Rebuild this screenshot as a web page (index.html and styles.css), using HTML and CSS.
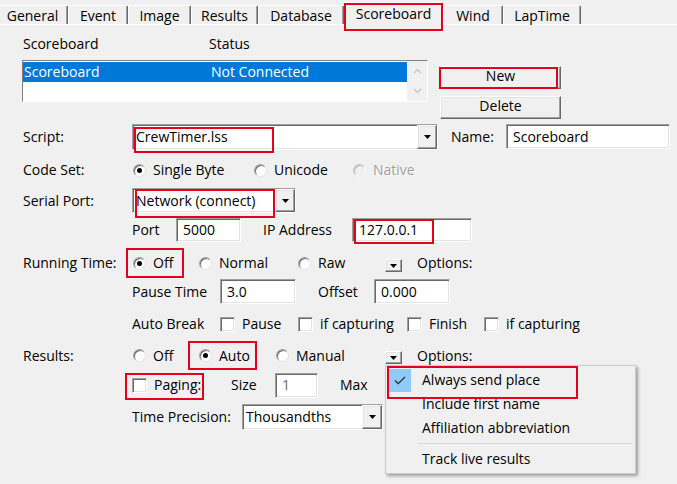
FILE: index.html
```html
<!DOCTYPE html>
<html>
<head>
<meta charset="utf-8">
<title>Scoreboard</title>
<link rel="stylesheet" href="styles.css">
</head>
<body>
<div class="tabs">
  <div class="tab tab-general">General</div>
  <div class="tab tab-event">Event</div>
  <div class="tab tab-image">Image</div>
  <div class="tab tab-results">Results</div>
  <div class="tab tab-database">Database</div>
  <div class="tab tab-scoreboard active mark mark-tab">Scoreboard</div>
  <div class="tab tab-wind">Wind</div>
  <div class="tab tab-laptime">LapTime</div>
</div>

<main class="panel">
  <div class="list-head"><span class="head-name">Scoreboard</span><span>Status</span></div>

  <div class="list-area">
    <div class="listbox">
      <div class="list-rows">
        <div class="list-row selected"><span class="row-name">Scoreboard</span><span>Not Connected</span></div>
      </div>
      <div class="vscroll">
        <span class="scroll-arrow"><svg width="9" height="6" viewBox="0 0 9 6"><path d="M1 5L4.5 1.5L8 5" fill="none" stroke="#c2c2c2" stroke-width="1.2"/></svg></span>
        <span class="scroll-arrow"><svg width="9" height="6" viewBox="0 0 9 6"><path d="M1 1L4.5 4.5L8 1" fill="none" stroke="#c2c2c2" stroke-width="1.2"/></svg></span>
      </div>
    </div>
    <div class="list-buttons">
      <div class="btn btn-new raised mark mark-new">New</div>
      <div class="btn btn-delete raised">Delete</div>
    </div>
  </div>

  <div class="row row-script">
    <span class="label">Script:</span>
    <div class="combo combo-script sunken mark mark-script">
      <span class="combo-value">CrewTimer.lss</span>
      <span class="drop raised"><svg width="7" height="4" viewBox="0 0 7 4"><path d="M0 0H7L3.5 4Z" fill="#000"/></svg></span>
    </div>
    <span class="label-name">Name:</span>
    <div class="field sunken field-name">Scoreboard</div>
  </div>

  <div class="row row-codeset">
    <span class="label">Code Set:</span>
    <span class="opt opt-single"><span class="radio checked"></span><span class="opt-text">Single Byte</span></span>
    <span class="opt opt-unicode"><span class="radio"></span><span class="opt-text">Unicode</span></span>
    <span class="opt opt-native disabled"><span class="radio"></span><span class="opt-text">Native</span></span>
  </div>

  <div class="row row-serial">
    <span class="label">Serial Port:</span>
    <div class="combo combo-serial sunken mark mark-serial">
      <span class="combo-value">Network (connect)</span>
      <span class="drop raised"><svg width="7" height="4" viewBox="0 0 7 4"><path d="M0 0H7L3.5 4Z" fill="#000"/></svg></span>
    </div>
  </div>

  <div class="row row-port indent">
    <span class="label-port">Port</span>
    <div class="field sunken field-port">5000</div>
    <span class="label-ip">IP Address</span>
    <div class="field sunken field-ip mark mark-ip">127.0.0.1</div>
  </div>

  <div class="row row-running">
    <span class="label">Running Time:</span>
    <span class="opt opt-off mark mark-off"><span class="radio checked"></span><span class="opt-text">Off</span></span>
    <span class="opt opt-normal"><span class="radio"></span><span class="opt-text">Normal</span></span>
    <span class="opt opt-raw"><span class="radio"></span><span class="opt-text">Raw</span></span>
    <span class="mini-drop raised"><svg width="7" height="4" viewBox="0 0 7 4"><path d="M0 0H7L3.5 4Z" fill="#000"/></svg></span>
    <span class="options-label">Options:</span>
  </div>

  <div class="row row-pause indent">
    <span class="label-sub">Pause Time</span>
    <div class="field sunken field-short">3.0</div>
    <span class="label-offset">Offset</span>
    <div class="field sunken field-short">0.000</div>
  </div>

  <div class="row row-autobreak indent">
    <span class="label-sub">Auto Break</span>
    <span class="opt chk-pause"><span class="checkbox"></span><span class="opt-text">Pause</span></span>
    <span class="opt chk-capt1"><span class="checkbox"></span><span class="opt-text">if capturing</span></span>
    <span class="opt chk-finish"><span class="checkbox"></span><span class="opt-text">Finish</span></span>
    <span class="opt chk-capt2"><span class="checkbox"></span><span class="opt-text">if capturing</span></span>
  </div>

  <div class="row row-results">
    <span class="label">Results:</span>
    <span class="opt opt-off"><span class="radio"></span><span class="opt-text">Off</span></span>
    <span class="opt opt-auto mark mark-auto"><span class="radio checked"></span><span class="opt-text">Auto</span></span>
    <span class="opt opt-manual"><span class="radio"></span><span class="opt-text">Manual</span></span>
    <span class="mini-drop raised"><svg width="7" height="4" viewBox="0 0 7 4"><path d="M0 0H7L3.5 4Z" fill="#000"/></svg></span>
    <span class="options-label">Options:</span>
  </div>

  <div class="row row-paging indent">
    <span class="opt chk-paging mark mark-paging"><span class="checkbox"></span><span class="opt-text">Paging:</span></span>
    <span class="label-size">Size</span>
    <div class="field sunken field-size disabled-field">1</div>
    <span class="label-max">Max</span>
  </div>

  <div class="row row-time indent">
    <span class="label-time">Time Precision:</span>
    <div class="combo combo-time sunken">
      <span class="combo-value">Thousandths</span>
      <span class="drop raised"><svg width="7" height="4" viewBox="0 0 7 4"><path d="M0 0H7L3.5 4Z" fill="#000"/></svg></span>
    </div>
  </div>
</main>

<div class="menu">
  <div class="menu-item mark mark-always">
    <span class="check checked"><svg width="12" height="9" viewBox="0 0 12 9"><path d="M1 4.5L4.2 7.6L11 1" fill="none" stroke="#2b2b2b" stroke-width="1.2"/></svg></span>
    <span>Always send place</span>
  </div>
  <div class="menu-item"><span class="check"></span><span>Include first name</span></div>
  <div class="menu-item"><span class="check"></span><span>Affiliation abbreviation</span></div>
  <div class="menu-sep"></div>
  <div class="menu-item"><span class="check"></span><span>Track live results</span></div>
</div>
</body>
</html>
```

FILE: styles.css
```css
* { box-sizing: border-box; }
html, body { margin: 0; padding: 0; }
body {
  width: 677px;
  height: 484px;
  overflow: hidden;
  position: relative;
  background: #f0f0f0;
  color: #000;
  font-family: "Open Sans", "Noto Sans", sans-serif;
  font-size: 14px;
  line-height: 20px;
}

/* ---------- red annotation boxes ---------- */
.mark { position: relative; }
.mark::after {
  content: "";
  position: absolute;
  border: 2px solid #e2001a;
  pointer-events: none;
}
.mark-tab::after { left: -1px; right: -1px; top: 0; bottom: -6px; }
.mark-new::after { left: -2px; right: 2px; top: 0; bottom: -1px; }
.mark-script::after { left: 1px; top: 2px; width: 136px; height: 22px; }
.mark-serial::after { left: 2px; top: 0; width: 136px; height: 25px; }
.mark-ip::after { left: 1px; top: 0; width: 76px; height: 21px; }
.mark-off::after { left: -6px; right: 14px; top: 0; bottom: 0; }
.mark-auto::after { left: -10px; right: 18px; top: 0; bottom: 0; }
.mark-paging::after { left: -7px; right: 27px; top: 1px; bottom: -2px; }
.mark-always::after { left: -1px; top: -2px; width: 187px; height: 29px; }

/* ---------- 3D borders ---------- */
.sunken {
  background: #fff;
  border: 1px solid;
  border-color: #a0a0a0 #fff #fff #a0a0a0;
  box-shadow: inset 1px 1px 0 #696969, inset -1px -1px 0 #e3e3e3;
}
.raised {
  background: #f0f0f0;
  border: 1px solid;
  border-color: #fff #696969 #696969 #fff;
  box-shadow: inset -1px -1px 0 #a0a0a0, inset 1px 1px 0 #e3e3e3;
}

/* ---------- tabs ---------- */
.tabs {
  display: flex;
  align-items: flex-end;
  height: 25px;
  margin-left: -3px;
  border-bottom: 1px solid #fff;
}
.tab {
  height: 19px;
  padding-top: 1px;
  line-height: 17px;
  text-align: center;
  white-space: nowrap;
  border: 1px solid #fff;
  border-bottom: 0;
  border-right-color: #696969;
  box-shadow: inset -1px 0 0 #a0a0a0;
  border-radius: 2px 2px 0 0;
  background: #f0f0f0;
}
.tab-general { width: 71px; }
.tab-event { width: 60px; }
.tab-image { width: 63px; }
.tab-results { width: 67px; }
.tab-database { width: 86px; }
.tab-scoreboard { width: 99px; }
.tab-wind { width: 60px; }
.tab-laptime { width: 78px; }
.tab.active {
  height: 23px;
  margin-bottom: -1px;
  padding-top: 2px;
}

/* ---------- panel ---------- */
.panel { padding-left: 23px; }

.list-head { display: flex; margin-top: 9px; height: 20px; }
.head-name { width: 186px; }

.list-area { display: flex; margin-top: 6px; margin-left: -1px; }
.listbox {
  width: 406px;
  height: 42px;
  display: flex;
  background: #fff;
  border: 1px solid;
  border-color: #828282 #fff #fff #828282;
}
.list-rows { flex: 1; padding-top: 1px; }
.list-row { display: flex; height: 20px; padding-left: 1px; }
.list-row.selected { background: #0078d7; color: #fff; }
.row-name { width: 187px; }
.vscroll {
  width: 20px;
  display: flex;
  flex-direction: column;
  background: #f0f0f0;
}
.scroll-arrow { flex: 1; display: flex; align-items: center; justify-content: center; }
.scroll-arrow svg { display: block; }

.list-buttons { display: flex; flex-direction: column; margin-left: 12px; }
.btn { width: 121px; height: 23px; text-align: center; line-height: 18px; }
.btn-new { margin-top: 6px; }
.btn-delete { margin-top: 7px; }

/* ---------- form rows ---------- */
.row { display: flex; align-items: center; }
.row.indent { margin-left: 109px; }
.label { width: 109px; flex: none; }

.combo { display: flex; position: relative; }
.combo-value { flex: 1; padding-left: 3px; display: flex; align-items: center; white-space: nowrap; }
.drop { width: 20px; display: flex; align-items: center; justify-content: center; }
.drop svg, .mini-drop svg { display: block; }

.field { padding-left: 6px; display: flex; align-items: center; white-space: nowrap; }

.row-script { margin-top: 5px; height: 26px; align-items: flex-start; }
.combo-script { width: 306px; height: 26px; }
.row-script .label { align-self: center; }
.label-name { width: 55px; margin-left: 13px; align-self: center; }
.field-name { width: 164px; height: 25px; }

.row-codeset { margin-top: 6px; height: 28px; }
.opt { display: flex; align-items: center; flex: none; align-self: stretch; }
.opt-text { margin-left: 7px; white-space: nowrap; }
.opt .radio { margin-left: 1px; }
.opt-single { width: 121px; }
.opt-unicode { width: 99px; }
.disabled .opt-text { color: #a0a0a0; text-shadow: 1px 1px 0 #fff; }

.radio {
  width: 13px;
  height: 13px;
  flex: none;
  border-radius: 50%;
  background: #fff;
  border: 1px solid;
  border-color: #a0a0a0 #e3e3e3 #e3e3e3 #a0a0a0;
  box-shadow: inset 1px 1px 0 #696969;
  position: relative;
}
.radio.checked::after {
  content: "";
  position: absolute;
  left: 3px;
  top: 3px;
  width: 5px;
  height: 5px;
  border-radius: 50%;
  background: #000;
}
.disabled .radio { background: #f0f0f0; border-color: #c8c8c8 #f6f6f6 #f6f6f6 #c8c8c8; box-shadow: inset 1px 1px 0 #b8b8b8; }

.checkbox {
  width: 15px;
  height: 15px;
  flex: none;
  background: #fff;
  border: 1px solid;
  border-color: #a0a0a0 #fff #fff #a0a0a0;
  box-shadow: inset 1px 1px 0 #696969, inset -1px -1px 0 #e3e3e3;
}

.row-serial { margin-top: 4px; height: 25px; }
.combo-serial { width: 164px; height: 25px; }

.row-port { margin-top: 5px; height: 24px; }
.label-port { width: 44px; }
.field-port { width: 65px; height: 24px; }
.label-ip { width: 89px; margin-left: 22px; }
.field-ip { width: 120px; height: 24px; }

.row-running { margin-top: 6px; height: 30px; }
.opt-off { width: 66px; }
.opt-normal { width: 99px; }
.opt-raw { width: 88px; }
.mini-drop {
  width: 17px;
  height: 13px;
  align-self: flex-end;
  margin-bottom: 6px;
  display: flex;
  align-items: center;
  justify-content: center;
}
.options-label { margin-left: 15px; }

.row-pause { margin-top: 1px; height: 25px; }
.label-sub { width: 88px; flex: none; }
.field-short { width: 76px; height: 25px; }
.label-offset { width: 56px; margin-left: 22px; }

.row-autobreak { margin-top: 8px; height: 24px; }
.chk-pause { width: 78px; }
.chk-capt1 { width: 109px; }
.chk-finish { width: 77px; }

.row-results { margin-top: 5px; height: 29px; }
.opt-auto { width: 77px; }
.opt-manual { width: 110px; }

.row-paging { margin-top: 2px; height: 26px; }
.chk-paging { width: 99px; }
.label-size { width: 44px; }
.field-size { width: 43px; height: 25px; }
.disabled-field { color: #6d6d6d; }
.label-max { margin-left: 22px; }

.row-time { margin-top: 6px; height: 26px; }
.label-time { width: 110px; }
.combo-time { width: 141px; height: 26px; }

/* ---------- popup menu ---------- */
.menu {
  position: absolute;
  left: 385px;
  top: 365px;
  width: 251px;
  height: 109px;
  padding: 2px;
  background: #f0f0f0;
  border: 1px solid #cccccc;
  box-shadow: 2px 2px 3px rgba(0, 0, 0, 0.35);
}
.menu-item { display: flex; align-items: center; height: 24px; line-height: 24px; white-space: nowrap; }
.check { width: 23px; height: 23px; margin-right: 11px; display: flex; align-items: center; justify-content: center; flex: none; }
.check.checked { background: #91c9f7; }
.check svg { display: block; }
.menu-sep { height: 1px; margin: 3px 1px 3px 30px; background: #d7d7d7; }
```
